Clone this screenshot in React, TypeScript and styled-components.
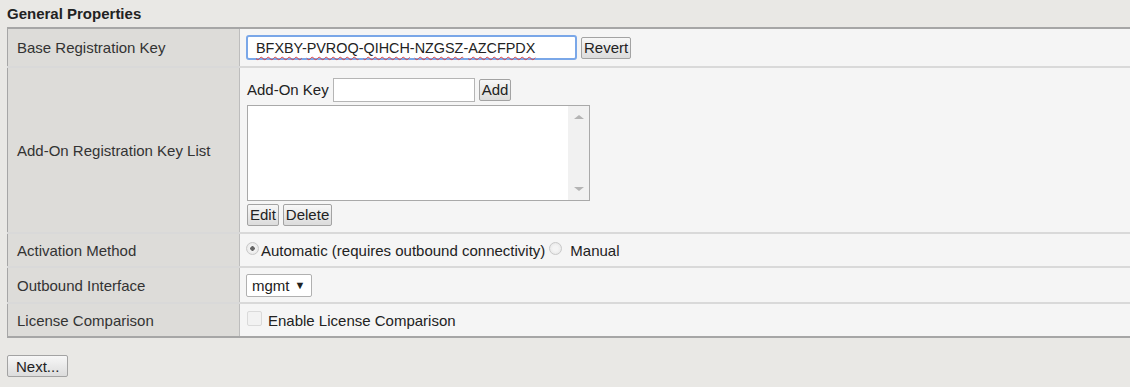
import { FunctionComponent } from 'react';
import styled, { createGlobalStyle } from 'styled-components';

const GlobalStyle = createGlobalStyle`
  html, body {
    margin: 0;
    padding: 0;
    background: #e9e8e5;
  }
  body {
    font-family: "Liberation Sans", Arial, sans-serif;
    font-size: 15px;
    color: #222;
  }
`;

const Page = styled.div`
  width: 1130px;
  height: 387px;
  padding: 5px 0 0 7px;
  box-sizing: border-box;
  overflow: hidden;
`;

const Title = styled.h3`
  margin: 0 0 4px 0;
  font-size: 15px;
  font-weight: bold;
  color: #222;
  line-height: 18px;
`;

const Table = styled.table`
  width: 1123px;
  border-collapse: collapse;
  border-top: 2px solid #a6a6a6;
  border-left: 1px solid #a6a6a6;
  border-bottom: 2px solid #a6a6a6;
`;

const Row = styled.tr<{ $h: number }>`
  height: ${(p) => p.$h}px;
  border-bottom: 2px solid #d9d9d9;

  &:last-child {
    border-bottom: none;
  }
`;

const Label = styled.td`
  width: 222px;
  padding: 0 0 0 9px;
  background: #dddcd9;
  border-right: 1px solid #bdbdbd;
  color: #333;
  vertical-align: middle;
`;

const Value = styled.td`
  padding: 0 0 0 6px;
  background: #f5f5f5;
  vertical-align: middle;
`;

const Line = styled.div`
  display: flex;
  align-items: center;
  gap: 4px;
`;

const Stack = styled.div`
  display: flex;
  flex-direction: column;
  gap: 3px;
  padding: 9px 0 6px 1px;
`;

const TextBox = styled.div<{ $w: number; $focus?: boolean }>`
  width: ${(p) => p.$w}px;
  height: ${(p) => (p.$focus ? 25 : 24)}px;
  box-sizing: border-box;
  background: #fff;
  border: ${(p) => (p.$focus ? '2px solid #7aa7e8' : '1px solid #b5b5b5')};
  border-radius: ${(p) => (p.$focus ? '3px' : '0')};
  padding: 0 8px;
  display: flex;
  align-items: center;
  font-size: 14.4px;
  color: #222;
  white-space: nowrap;
`;

const Misspelt = styled.span`
  text-decoration: underline wavy #e04040;
  text-decoration-thickness: 1px;
  text-underline-offset: 3px;
`;

const Button = styled.button<{ $wide?: boolean }>`
  font-family: "Liberation Sans", Arial, sans-serif;
  font-size: 15px;
  color: #222;
  height: 22px;
  padding: ${(p) => (p.$wide ? '0 8px' : '0 2px')};
  border: 1px solid #a3a3a3;
  border-radius: 2px;
  background: linear-gradient(#f7f7f7, #dcdcdc);
  cursor: pointer;
`;

const ListBox = styled.div`
  width: 343px;
  height: 96px;
  box-sizing: border-box;
  border: 1px solid #a9a9a9;
  background: #fff;
  display: flex;
  justify-content: flex-end;
`;

const ScrollTrack = styled.div`
  width: 21px;
  background: #f1f1f1;
  display: flex;
  flex-direction: column;
  justify-content: space-between;
  align-items: center;
  padding: 9px 0;
`;

const Arrow = styled.div<{ $up?: boolean }>`
  width: 0;
  height: 0;
  border-left: 5px solid transparent;
  border-right: 5px solid transparent;
  ${(p) =>
    p.$up
      ? 'border-bottom: 4px solid #b4b4b4;'
      : 'border-top: 4px solid #b4b4b4;'}
`;

const RadioLabel = styled.label<{ $gap: number }>`
  display: inline-flex;
  align-items: center;
  gap: ${(p) => p.$gap}px;
  color: #222;
`;

const Radio = styled.span<{ $on?: boolean }>`
  width: 13px;
  height: 13px;
  box-sizing: border-box;
  border-radius: 50%;
  border: 1px solid #c9c9c9;
  background: radial-gradient(
    circle,
    ${(p) => (p.$on ? '#666 0 2px, ' : '')}#f4f4f4 2.5px,
    #e2e2e2 100%
  );
  position: relative;
  top: -2px;
`;

const Select = styled.div`
  width: 66px;
  height: 23px;
  box-sizing: border-box;
  border: 1px solid #b0b0b0;
  border-radius: 2px;
  background: #fff;
  display: flex;
  align-items: center;
  gap: 5px;
  padding-left: 5px;
  font-size: 15px;
`;

const Caret = styled.span`
  font-size: 11px;
`;

const Check = styled.span`
  width: 15px;
  height: 15px;
  box-sizing: border-box;
  border: 1px solid #dadada;
  border-radius: 2px;
  background: #f2f2f2;
  margin: 0 2px 0 1px;
  position: relative;
  top: -2px;
`;

const Footer = styled.div`
  padding-top: 17px;
`;

const key = ['BFXBY', 'PVROQ', 'QIHCH', 'NZGSZ', 'AZCFPDX'];

const App: FunctionComponent = (): JSX.Element => {
  return (
    <Page>
      <GlobalStyle />
      <Title>General Properties</Title>
      <Table>
        <tbody>
          <Row $h={39}>
            <Label>Base Registration Key</Label>
            <Value>
              <Line>
                <TextBox $w={331} $focus>
                  {key.map((k, i) => (
                    <span key={k}>
                      <Misspelt>{k}</Misspelt>
                      {i < key.length - 1 ? '-' : ''}
                    </span>
                  ))}
                </TextBox>
                <Button>Revert</Button>
              </Line>
            </Value>
          </Row>
          <Row $h={166}>
            <Label>Add-On Registration Key List</Label>
            <Value>
              <Stack>
                <Line>
                  Add-On Key
                  <TextBox $w={142} />
                  <Button>Add</Button>
                </Line>
                <ListBox>
                  <ScrollTrack>
                    <Arrow $up />
                    <Arrow />
                  </ScrollTrack>
                </ListBox>
                <Line>
                  <Button>Edit</Button>
                  <Button>Delete</Button>
                </Line>
              </Stack>
            </Value>
          </Row>
          <Row $h={34}>
            <Label>Activation Method</Label>
            <Value>
              <Line>
                <RadioLabel $gap={2}>
                  <Radio $on />
                  Automatic (requires outbound connectivity)
                </RadioLabel>
                <RadioLabel $gap={8}>
                  <Radio />
                  Manual
                </RadioLabel>
              </Line>
            </Value>
          </Row>
          <Row $h={36}>
            <Label>Outbound Interface</Label>
            <Value>
              <Select>
                mgmt <Caret>▼</Caret>
              </Select>
            </Value>
          </Row>
          <Row $h={34}>
            <Label>License Comparison</Label>
            <Value>
              <Line>
                <Check />
                Enable License Comparison
              </Line>
            </Value>
          </Row>
        </tbody>
      </Table>
      <Footer>
        <Button $wide>Next...</Button>
      </Footer>
    </Page>
  );
};

export default App;
